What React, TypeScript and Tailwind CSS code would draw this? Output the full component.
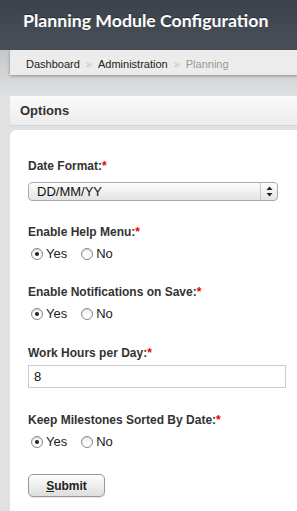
import { ReactNode } from "react";

const sans = "font-['Liberation_Sans',Arial,sans-serif]";

function Label({ children, className = "" }: { children: ReactNode; className?: string }) {
  return (
    <div className={`text-[12px] leading-[15px] font-bold text-[#333] ${className}`}>
      {children}
      <span className="text-[#e00]">*</span>
    </div>
  );
}

function Radio({ checked, label }: { checked?: boolean; label: string }) {
  return (
    <label className="flex items-center">
      <span className="w-[12px] h-[12px] rounded-full border border-[#8a8a8a] bg-gradient-to-b from-[#f4f4f4] to-[#fff] flex items-center justify-center shadow-[inset_0_1px_1px_rgba(0,0,0,0.15)]">
        {checked && <span className="w-[4px] h-[4px] rounded-full bg-[#222]" />}
      </span>
      <span className="ml-[3px] text-[13px] leading-[16px] text-[#222]">{label}</span>
    </label>
  );
}

function YesNo() {
  return (
    <div className="mt-[6px] flex items-center gap-[14px] pl-[3px] h-[16px]">
      <Radio checked label="Yes" />
      <Radio label="No" />
    </div>
  );
}

export default function App() {
  return (
    <div className={`w-[297px] h-[511px] overflow-hidden bg-[#dfe1e3] ${sans}`}>
      {/* Header */}
      <div className="h-[50px] bg-gradient-to-b from-[#3c424b] to-[#4a505a] pl-[23px] pt-[9px]">
        <h1 className="font-['Lato',sans-serif] font-bold text-[17.7px] leading-[24px] text-white whitespace-nowrap [text-shadow:0_-1px_0_rgba(0,0,0,0.4)]">
          Planning Module Configuration
        </h1>
      </div>

      <div className="bg-gradient-to-b from-[#c5c7c9] to-[#dfe1e3] h-[46px]">
        {/* Breadcrumb */}
        <div className="ml-[10px] h-[25px] bg-[#ececec] shadow-[0_1px_3px_rgba(0,0,0,0.35)] flex items-center pt-[3px] pl-[16px] text-[11px] whitespace-nowrap">
          <span className="text-[#222]">Dashboard</span>
          <span className="text-[#c4c4c4] px-[6px]">»</span>
          <span className="text-[#222]">Administration</span>
          <span className="text-[#c4c4c4] px-[6px]">»</span>
          <span className="text-[#999]">Planning</span>
        </div>
      </div>

      {/* Options panel */}
      <div className="ml-[10px]">
        <div className="h-[30px] bg-gradient-to-b from-[#fafafa] to-[#ededed] border-b border-[#d4d4d4] flex items-center pl-[10px] pt-[1px]">
          <span className="text-[13px] font-bold text-[#333]">Options</span>
        </div>
        <div className="mt-[4px] bg-white rounded-tl-[6px] pl-[18px] pt-[29px] h-[400px]">
          <Label>Date Format:</Label>
          <div className="mt-[8px] w-[250px] h-[19px] rounded-[4px] border border-[#aaa] bg-gradient-to-b from-[#fdfdfd] to-[#e4e4e4] flex items-center">
            <span className="flex-1 pl-[8px] text-[13px] leading-[16px] text-[#111]">DD/MM/YY</span>
            <span className="w-[17px] h-full border-l border-[#c8c8c8] flex items-center justify-center">
              <svg width="7" height="11" viewBox="0 0 7 11">
                <path d="M3.5 0.5 L6.5 4 L0.5 4 Z" fill="#222" />
                <path d="M3.5 10.5 L6.5 7 L0.5 7 Z" fill="#222" />
              </svg>
            </span>
          </div>

          <Label className="mt-[24px]">Enable Help Menu:</Label>
          <YesNo />

          <Label className="mt-[23px]">Enable Notifications on Save:</Label>
          <YesNo />

          <Label className="mt-[24px]">Work Hours per Day:</Label>
          <div className="mt-[4px] w-[258px] h-[23px] border border-[#ccc] bg-white flex items-center pl-[5px] text-[13px] text-[#111]">
            8
          </div>

          <Label className="mt-[25px]">Keep Milestones Sorted By Date:</Label>
          <YesNo />

          <button className="mt-[24px] w-[77px] h-[23px] rounded-[5px] border border-[#999] bg-gradient-to-b from-[#fefefe] to-[#dedede] shadow-[0_1px_1px_rgba(0,0,0,0.1)] text-[12px] font-bold text-[#222]">
            <span className="underline">S</span>ubmit
          </button>
        </div>
      </div>
    </div>
  );
}
